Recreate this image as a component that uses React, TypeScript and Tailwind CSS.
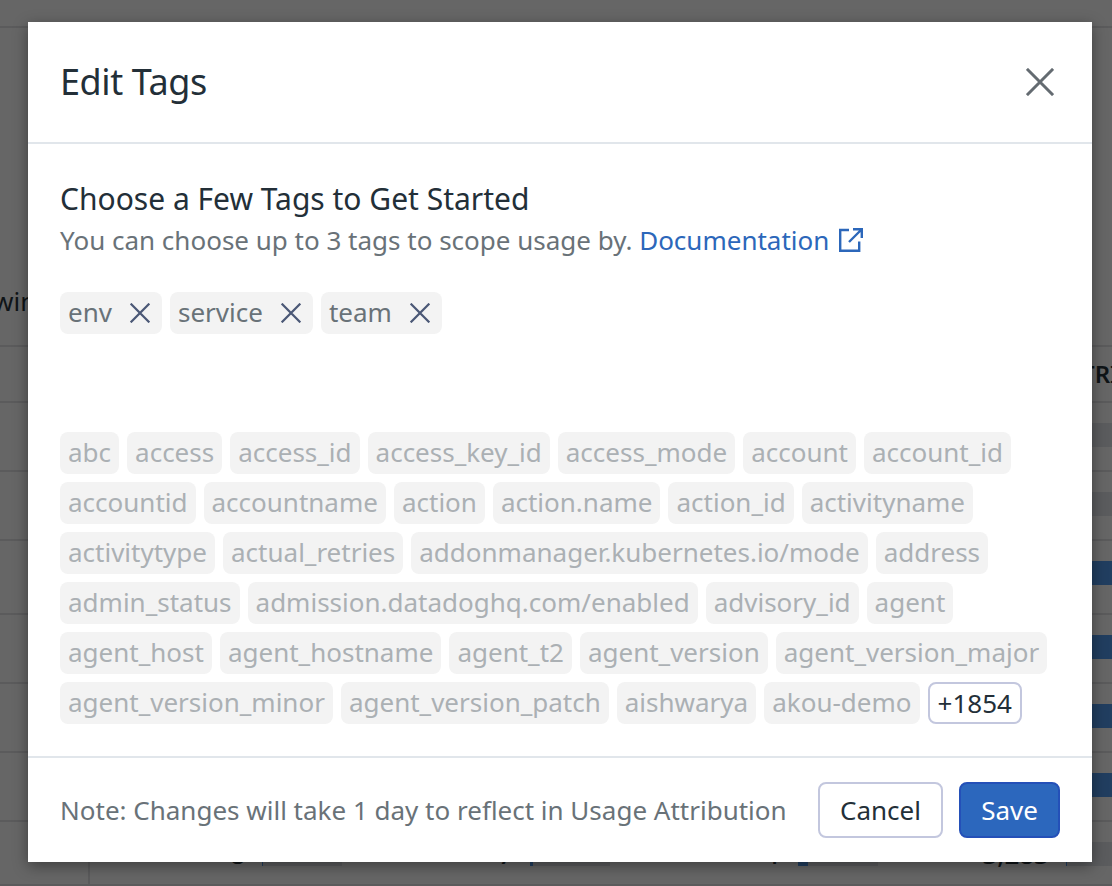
const selectedTags = ["env", "service", "team"];

const tagRows = [
  ["abc", "access", "access_id", "access_key_id", "access_mode", "account", "account_id"],
  ["accountid", "accountname", "action", "action.name", "action_id", "activityname"],
  ["activitytype", "actual_retries", "addonmanager.kubernetes.io/mode", "address"],
  ["admin_status", "admission.datadoghq.com/enabled", "advisory_id", "agent"],
  ["agent_host", "agent_hostname", "agent_t2", "agent_version", "agent_version_major"],
  ["agent_version_minor", "agent_version_patch", "aishwarya", "akou-demo"],
];

type Cell = { value: string; fill: number };

const none: Cell[] = [0, 1, 2, 3].map(() => ({ value: "", fill: 0 }));
const full: Cell[] = [0, 1, 2, 3].map(() => ({ value: "", fill: 80 }));
const usageRows: { height: string; cells: Cell[] }[] = [
  { height: "h-[69px]", cells: none },
  { height: "h-[69px]", cells: none },
  { height: "h-[74px]", cells: full },
  { height: "h-[69px]", cells: full },
  { height: "h-[69px]", cells: full },
  { height: "h-[69px]", cells: full },
  {
    height: "h-[64px]",
    cells: [
      { value: "8", fill: 1 },
      { value: "7", fill: 3 },
      { value: "1", fill: 10 },
      { value: "3,283", fill: 1 },
    ],
  },
];

function Cross({ className, width }: { className: string; width: number }) {
  return (
    <svg viewBox="0 0 30 30" className={className} fill="none" stroke="currentColor" strokeWidth={width}>
      <path d="M1 1 29 29M29 1 1 29" />
    </svg>
  );
}

function UsagePage() {
  return (
    <div className="flex h-full w-[1162px] flex-col bg-[#666666] text-[#0f1417]">
      <div className="h-7 shrink-0 border-b-2 border-[#5b5b5c]" />
      <div className="flex h-[319px] shrink-0 items-end border-b-2 border-[#5b5b5c] pb-[26px]">
        <span className="-ml-[7px] text-[26px] leading-9">wing</span>
      </div>
      <div className="flex h-14 shrink-0 items-center justify-end border-b-2 border-[#5b5b5c]">
        <span className="w-[81px] text-[24px] font-semibold">TRICS</span>
      </div>
      {usageRows.map((row, i) => (
        <div key={i} className={`flex shrink-0 border-b-2 border-[#5b5b5c] ${row.height}`}>
          <div className="w-[90px] shrink-0 border-r-2 border-[#5b5b5c]" />
          {row.cells.map((cell, j) => (
            <div key={j} className="flex w-[268px] shrink-0 items-start justify-end gap-[17px] pt-5 pr-4">
              <span className="text-[26px] leading-6 font-medium">{cell.value}</span>
              <div className="h-6 w-20 bg-[#5b5c5e]">
                <div className="h-full bg-[#213e60]" style={{ width: cell.fill }} />
              </div>
            </div>
          ))}
        </div>
      ))}
    </div>
  );
}

export default function App() {
  return (
    <div className="relative h-[886px] w-[1112px] overflow-hidden bg-[#666666] font-['Noto_Sans',sans-serif]">
      <UsagePage />
      <div className="absolute top-[22px] left-7 flex h-[840px] w-[1064px] flex-col bg-white shadow-[0_4px_14px_rgba(0,0,0,0.4)]">
        <header className="flex h-[122px] shrink-0 items-center justify-between border-b-2 border-[#e1e6eb] pr-[38px] pl-8">
          <h1 className="text-[36px] leading-[48px] tracking-[-0.4px] text-[#232f38]">Edit Tags</h1>
          <button aria-label="Close">
            <Cross className="size-7 text-[#646b71]" width={3.2} />
          </button>
        </header>

        <main className="flex flex-1 flex-col px-8 pt-9">
          <h2 className="text-[30px] leading-[38px] text-[#232f38]">Choose a Few Tags to Get Started</h2>
          <p className="flex items-center text-[26px] leading-[44px] whitespace-pre text-[#697278]">
            You can choose up to 3 tags to scope usage by.{" "}
            <a className="flex items-center gap-[10px] text-[#2c67ba]">
              Documentation
              <svg viewBox="0 0 24 24" className="size-6" fill="none" stroke="currentColor" strokeWidth="2.4">
                <path d="M10 2H1.2v20.8h19V13.5M10 14 22 2M14 1.2h8.8V10" />
              </svg>
            </a>
          </p>

          <div className="mt-[30px] flex gap-2">
            {selectedTags.map((tag) => (
              <span key={tag} className="flex h-[42px] items-center rounded-lg bg-[#f3f3f3] pr-3 pl-2 text-[26px] text-[#697278]">
                <span className="pb-[2px]">{tag}</span>
                <Cross className="ml-[18px] size-5 text-[#4b5876]" width={3.4} />
              </span>
            ))}
          </div>

          <div className="mt-[98px] flex flex-col gap-2">
            {tagRows.map((row, i) => (
              <div key={i} className="flex gap-2">
                {row.map((tag) => (
                  <span key={tag} className="flex h-[42px] items-center rounded-lg bg-[#f3f3f3] px-2 pb-[2px] text-[26px] text-[#abb0b4]">
                    {tag}
                  </span>
                ))}
                {i === tagRows.length - 1 && (
                  <button className="flex h-[42px] items-center rounded-lg border-2 border-[#c3c7de] px-2 text-[26px] text-[#232f38]">
                    +1854
                  </button>
                )}
              </div>
            ))}
          </div>
        </main>

        <footer className="flex h-[106px] shrink-0 items-center border-t-2 border-[#e1e6eb] px-8">
          <p className="flex-1 text-[26px] whitespace-nowrap text-[#697278]">
            Note: Changes will take 1 day to reflect in Usage Attribution
          </p>
          <button className="h-14 w-[125px] rounded-lg border-2 border-[#c3c7de] text-[26px] text-[#232f38]">Cancel</button>
          <button className="ml-4 h-14 w-[101px] rounded-lg border-2 border-[#2450b8] bg-[#2c67bd] text-[26px] font-[450] text-white">
            Save
          </button>
        </footer>
      </div>
    </div>
  );
}
